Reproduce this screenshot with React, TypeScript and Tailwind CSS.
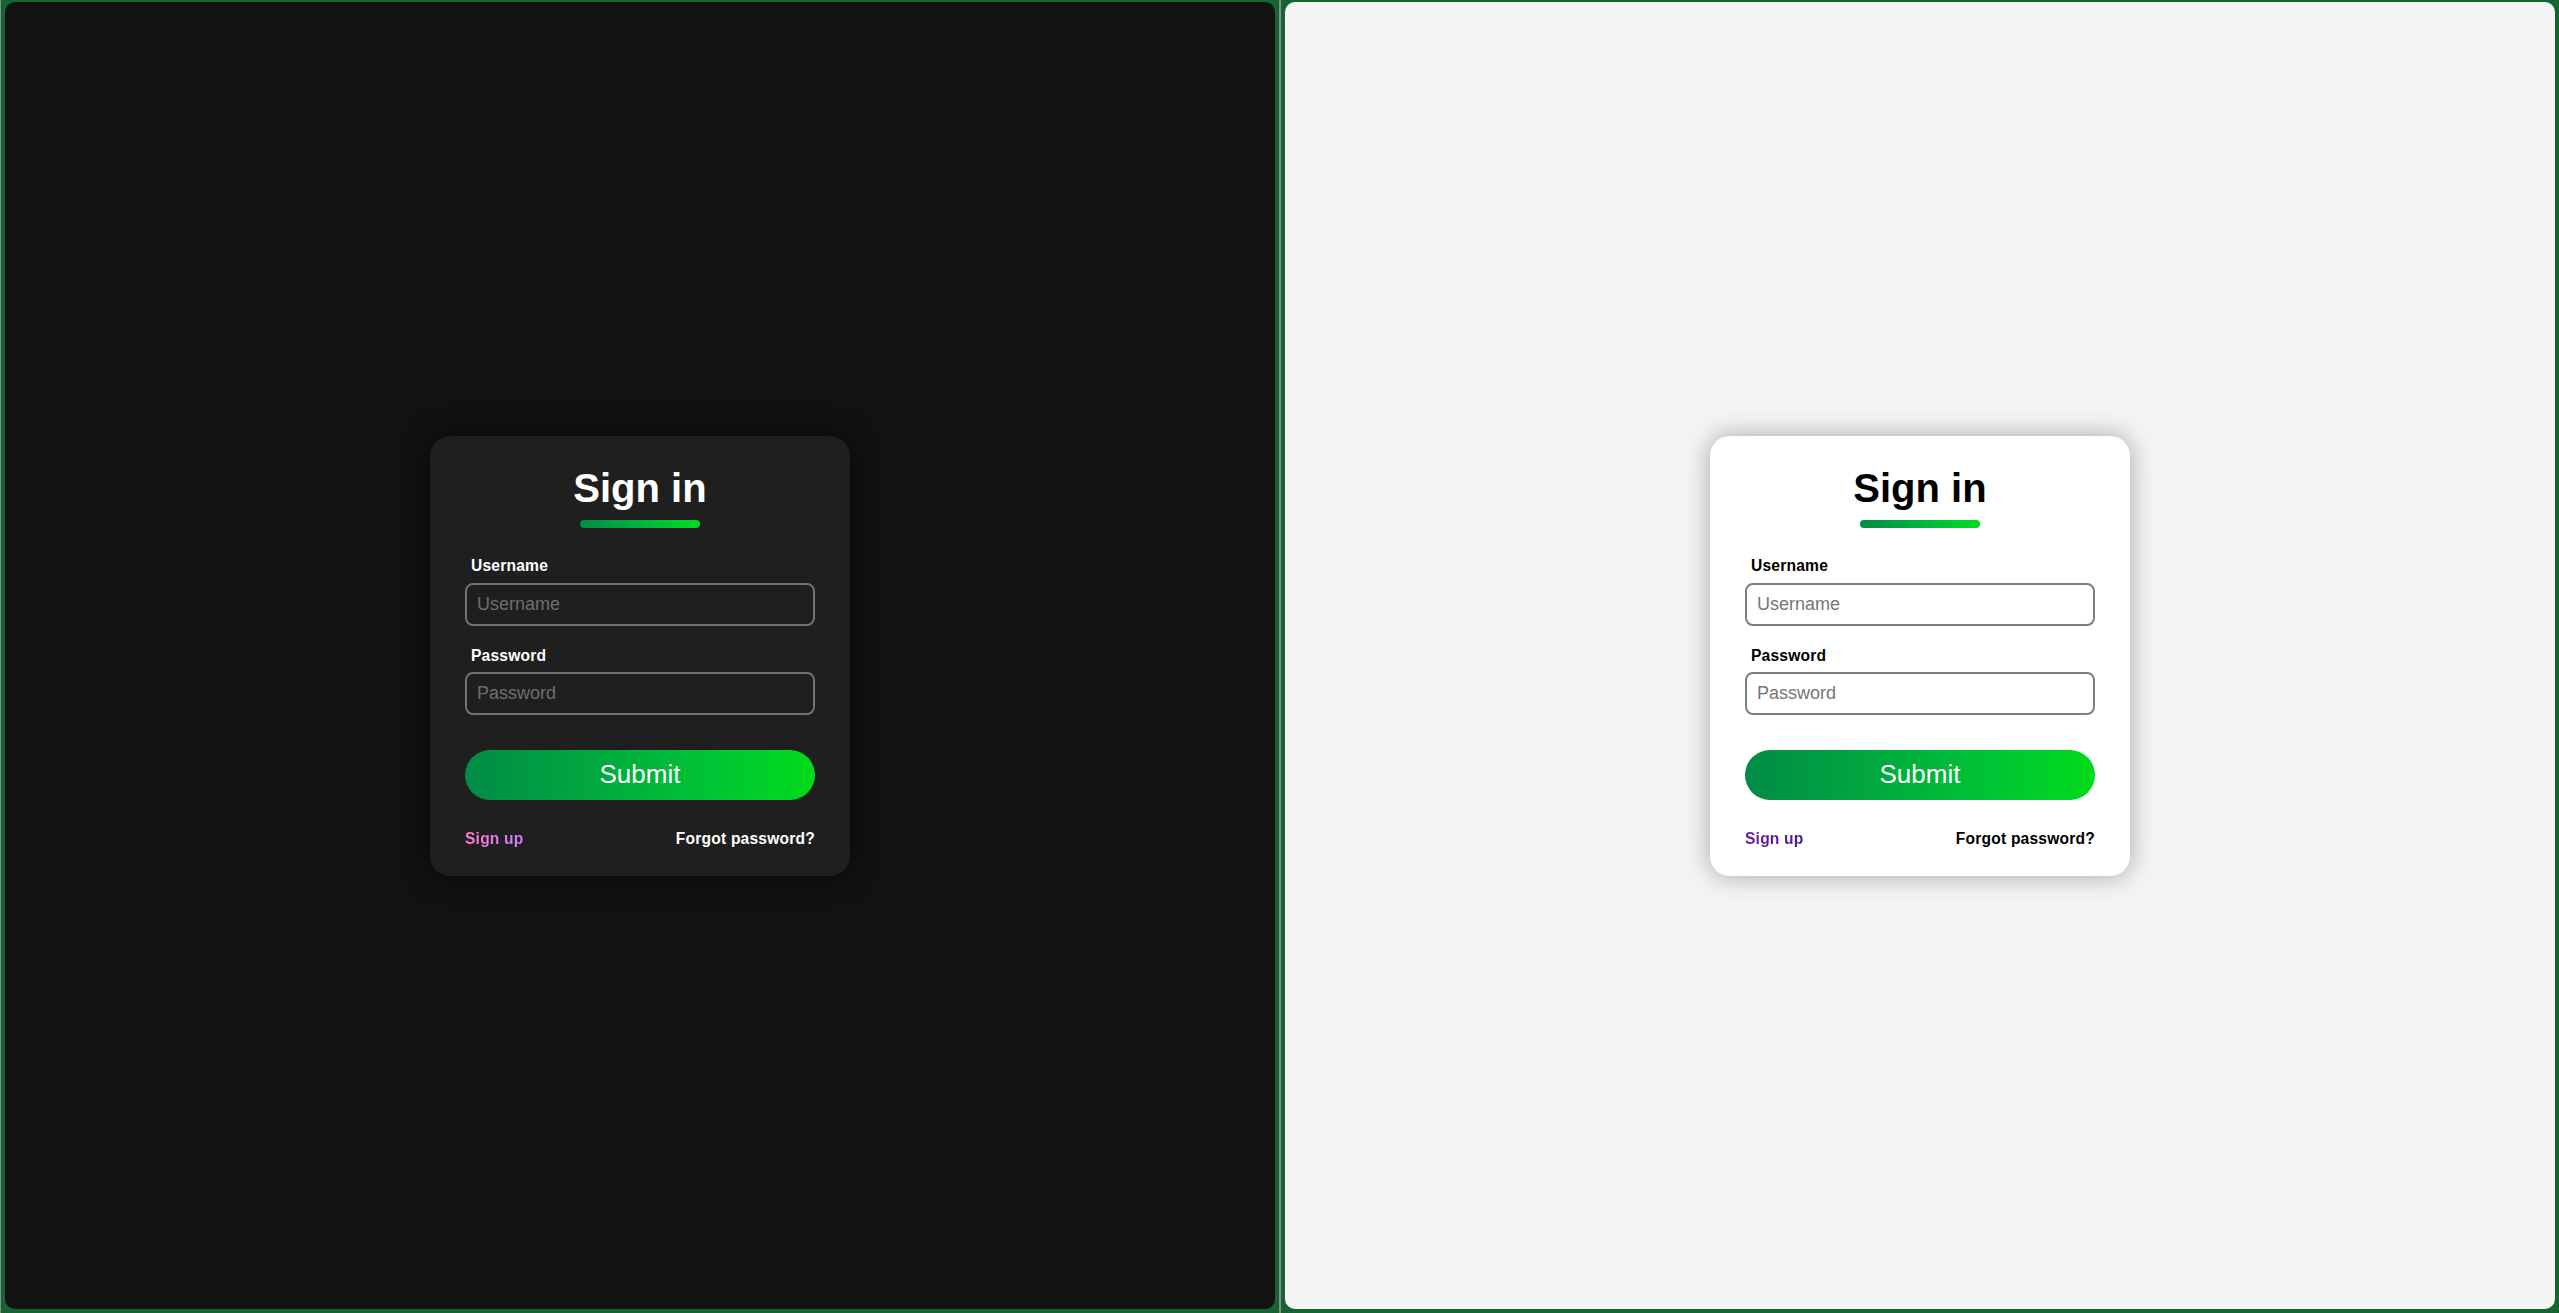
type Theme = 'dark' | 'light';

function SignInCard({ theme }: { theme: Theme }) {
  const dark = theme === 'dark';
  const text = dark ? 'text-white' : 'text-black';
  const input = dark
    ? 'border-[#727272] bg-[#1f1f1f] text-white placeholder:text-[#6e6e6e]'
    : 'border-[#7f7f7f] bg-white text-black placeholder:text-[#767676]';

  return (
    <div
      className={`w-[420px] rounded-[20px] px-[35px] pt-[29px] pb-[28px] ${
        dark ? 'bg-[#1f1f1f] shadow-[0_0_26px_rgba(0,0,0,0.6)]' : 'bg-white shadow-[0_0_26px_rgba(0,0,0,0.32)]'
      }`}
    >
      <h1 className={`text-center text-[40px] leading-[46px] font-bold ${text}`}>Sign in</h1>
      <div className="mx-auto mt-[9px] h-[8px] w-[120px] rounded-full bg-gradient-to-r from-[#008c45] to-[#00dc1a]" />

      <label className={`mt-[29px] block pl-[6px] text-[15.6px] leading-[18px] font-bold tracking-[0.2px] ${text}`}>Username</label>
      <input
        type="text"
        placeholder="Username"
        className={`mt-[8px] block h-[43px] w-full rounded-[8px] border-2 px-[10px] text-[18px] outline-none ${input}`}
      />

      <label className={`mt-[21px] block pl-[6px] text-[15.6px] leading-[18px] font-bold tracking-[0.2px] ${text}`}>Password</label>
      <input
        type="password"
        placeholder="Password"
        className={`mt-[7px] block h-[43px] w-full rounded-[8px] border-2 px-[10px] text-[18px] outline-none ${input}`}
      />

      <button className="mt-[35px] block h-[50px] w-full rounded-full bg-gradient-to-r from-[#008c45] to-[#00dc18] text-[26px] text-white">
        Submit
      </button>

      <div className="mt-[30px] flex items-center justify-between text-[15.6px] leading-[18px] font-bold tracking-[0.2px]">
        <a
          href="#"
          className={`bg-clip-text text-transparent bg-gradient-to-r ${
            dark ? 'from-[#ff79d2] to-[#c97cff]' : 'from-[#6b1aa0] to-[#4a1f9a]'
          }`}
        >
          Sign up
        </a>
        <a href="#" className={text}>
          Forgot password?
        </a>
      </div>
    </div>
  );
}

export default function App() {
  return (
    <div className="flex h-[1313px] w-full bg-[#156530] font-['Liberation_Sans',Arial,sans-serif]">
      <div className="w-px bg-[#8a8a8a]" />
      <div className="mt-[2px] mb-[4px] ml-[4px] flex w-[1270px] items-center justify-center rounded-[10px] bg-[#121212]">
        <SignInCard theme="dark" />
      </div>
      <div className="ml-[4px] w-[2px] bg-[#8a8a8a]" />
      <div className="mt-[2px] mr-[4px] mb-[4px] ml-[4px] flex flex-1 items-center justify-center rounded-[10px] bg-[#f4f4f4]">
        <SignInCard theme="light" />
      </div>
    </div>
  );
}
